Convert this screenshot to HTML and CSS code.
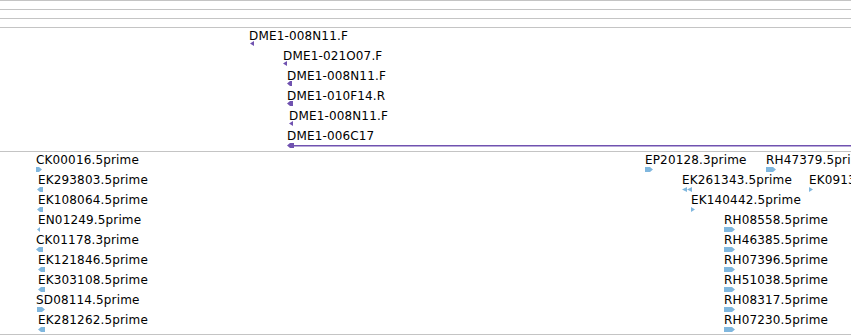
FILE: index.html
```html
<!DOCTYPE html>
<html lang="en">
<head>
  <meta charset="UTF-8" />
  <title>Annotation tracks</title>
  <link rel="stylesheet" href="styles.css">
</head>
<body>
  <div class="ruler">
    <div class="strip"></div>
    <div class="strip"></div>
    <div class="strip"></div>
  </div>
  <div class="track track-bac" id="bacTrack"></div>
  <div class="track track-est" id="estTrack"></div>
  <script>
    // x = label start, gx = glyph start, w = glyph width, row = lane
    const bacEnds = [
      { name: "DME1-008N11.F", x: 249, gx: 250, w: 4, dir: "l", row: 0 },
      { name: "DME1-021O07.F", x: 283, gx: 283, w: 4, dir: "l", row: 1 },
      { name: "DME1-008N11.F", x: 287, gx: 287, w: 5, dir: "l", row: 2 },
      { name: "DME1-010F14.R", x: 287, gx: 287, w: 6, dir: "l", row: 3 },
      { name: "DME1-008N11.F", x: 289, gx: 289, w: 4, dir: "l", row: 4 },
      { name: "DME1-006C17", x: 287, gx: 287, w: 7, dir: "l", row: 5, dy: 2, tail: 851 }
    ];

    const ests = [
      { name: "CK00016.5prime", x: 36, gx: 36, w: 6, dir: "r", row: 0 },
      { name: "EK293803.5prime", x: 38, gx: 37, w: 6, dir: "l", row: 1 },
      { name: "EK108064.5prime", x: 38, gx: 37, w: 6, dir: "l", row: 2 },
      { name: "EN01249.5prime", x: 38, gx: 37, w: 3, dir: "l", row: 3 },
      { name: "CK01178.3prime", x: 36, gx: 36, w: 7, dir: "l", row: 4 },
      { name: "EK121846.5prime", x: 38, gx: 38, w: 7, dir: "l", row: 5 },
      { name: "EK303108.5prime", x: 38, gx: 38, w: 7, dir: "l", row: 6 },
      { name: "SD08114.5prime", x: 36, gx: 37, w: 8, dir: "r", row: 7 },
      { name: "EK281262.5prime", x: 38, gx: 38, w: 7, dir: "l", row: 8 },
      { name: "EP20128.3prime", x: 645, gx: 645, w: 8, dir: "r", row: 0 },
      { name: "RH47379.5prime", x: 766, gx: 766, w: 10, dir: "r", row: 0 },
      { name: "EK261343.5prime", x: 682, gx: 682, w: 10, dir: "ll", row: 1 },
      { name: "EK091378.5prime", x: 809, gx: 809, w: 4, dir: "r", row: 1 },
      { name: "EK140442.5prime", x: 691, gx: 691, w: 4, dir: "r", row: 2 },
      { name: "RH08558.5prime", x: 724, gx: 724, w: 11, dir: "r", row: 3 },
      { name: "RH46385.5prime", x: 724, gx: 724, w: 11, dir: "r", row: 4 },
      { name: "RH07396.5prime", x: 724, gx: 724, w: 11, dir: "r", row: 5 },
      { name: "RH51038.5prime", x: 724, gx: 724, w: 11, dir: "r", row: 6 },
      { name: "RH08317.5prime", x: 724, gx: 724, w: 11, dir: "r", row: 7 },
      { name: "RH07230.5prime", x: 724, gx: 724, w: 11, dir: "r", row: 8 }
    ];

    function arrowPoints(dir, w) {
      if (dir === "r") {
        return w <= 4 ? ["0,0 " + w + ",2.5 0,5"]
                      : ["0,0 " + (w - 3) + ",0 " + w + ",2.5 " + (w - 3) + ",5 0,5"];
      }
      if (dir === "ll") {
        return ["0,2.5 5,0 5,5", "5,2.5 10,0 10,5"];
      }
      return w <= 4 ? ["0,2.5 " + w + ",0 " + w + ",5"]
                    : ["0,2.5 3,0 " + w + ",0 " + w + ",5 3,5"];
    }

    function glyph(f) {
      const end = f.tail ? f.tail - f.gx : f.w;
      let shapes = arrowPoints(f.dir, f.w)
        .map(p => `<polygon points="${p}"/>`).join("");
      if (f.tail) {
        shapes += `<rect x="${f.w - 1}" y="2" width="${end - f.w + 1}" height="1.5"/>`;
      }
      return `<svg class="glyph" width="${end}" height="5" style="margin-left:${f.gx - f.x}px">${shapes}</svg>`;
    }

    function drawTrack(id, features, top) {
      const track = document.getElementById(id);
      features.forEach(f => {
        const el = document.createElement("div");
        el.className = "feature";
        el.style.left = f.x + "px";
        el.style.top = (top + f.row * 20) + "px";
        el.innerHTML = `<span class="label">${f.name}</span>` +
          (f.dy ? `<div style="height:${f.dy}px"></div>` : "") + glyph(f);
        track.appendChild(el);
      });
    }

    drawTrack("bacTrack", bacEnds, 1);
    drawTrack("estTrack", ests, 1);
  </script>
</body>
</html>
```

FILE: styles.css
```css
body {
  margin: 0;
  width: 851px;
  height: 335px;
  overflow: hidden;
  background-color: #ffffff;
  font-family: "DejaVu Sans", sans-serif;
}

.strip {
  height: 8px;
  border-top: 1px solid #c4c4c4;
}

.track {
  position: relative;
  overflow: hidden;
  border-top: 1px solid #c4c4c4;
}

.track-bac {
  height: 123px;
}

.track-est {
  height: 182px;
  border-bottom: 1px solid #c4c4c4;
}

.feature {
  position: absolute;
  white-space: nowrap;
}

.label {
  display: block;
  height: 12px;
  font-size: 12px;
  line-height: 14px;
  letter-spacing: 0.15px;
  color: #000000;
}

.track-est .label {
  height: 14px;
}

.glyph {
  display: block;
}

.track-bac .glyph {
  fill: #7052b0;
}

.track-est .glyph {
  fill: #80b7de;
}
```
